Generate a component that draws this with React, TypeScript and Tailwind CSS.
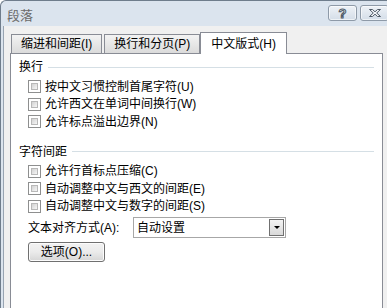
const FONT = "font-['Liberation_Sans','Noto_Sans_CJK_SC',sans-serif]";

type Option = { label: string; key: string };

const lineBreakOptions: Option[] = [
  { label: "按中文习惯控制首尾字符", key: "U" },
  { label: "允许西文在单词中间换行", key: "W" },
  { label: "允许标点溢出边界", key: "N" },
];

const spacingOptions: Option[] = [
  { label: "允许行首标点压缩", key: "C" },
  { label: "自动调整中文与西文的间距", key: "E" },
  { label: "自动调整中文与数字的间距", key: "S" },
];

function CheckBox() {
  return (
    <div className="h-[13px] w-[13px] shrink-0 border border-[#8e8f8f] bg-white p-[2px]">
      <div className="h-full w-full border border-[#b8b8b8] bg-gradient-to-br from-[#d2d2d2] to-[#f6f6f6]" />
    </div>
  );
}

function CheckRow({ label, keyName }: { label: string; keyName: string }) {
  return (
    <div className="flex h-[17.5px] items-center gap-[4px] pl-[17px]">
      <CheckBox />
      <span className="whitespace-nowrap">
        {label}({keyName})
      </span>
    </div>
  );
}

function GroupHeading({ title }: { title: string }) {
  return (
    <div className="flex h-[16px] items-center gap-[5px] pl-[8px] pr-[8px]">
      <span className="whitespace-nowrap">{title}</span>
      <div className="h-px flex-1 bg-[#d5dfe5]" />
    </div>
  );
}

function Tab({ label, active }: { label: string; active?: boolean }) {
  if (active) {
    return (
      <div className="relative z-10 -mb-px flex h-[22px] items-center border border-b-0 border-[#898c95] bg-white px-[10px]">
        {label}
      </div>
    );
  }
  return (
    <div className="flex h-[19px] items-center border border-b-0 border-[#898c95] bg-gradient-to-b from-[#f3f3f3] to-[#dbdbdb] px-[9px]">
      {label}
    </div>
  );
}

function CaptionButton({ children }: { children: React.ReactNode }) {
  return (
    <div className="flex h-[16px] w-[29px] items-center justify-center rounded-[3px] border border-[#8e9aa8] bg-gradient-to-b from-[#eef2f7] to-[#d4dde8] shadow-[inset_0_0_0_1px_rgba(255,255,255,0.6)]">
      {children}
    </div>
  );
}

export default function App() {
  return (
    <div className={`h-[308px] w-[387px] overflow-hidden bg-white text-[12px] leading-[16px] text-black ${FONT}`}>
      <div className="flex h-full flex-col rounded-tl-[6px] border-l border-t border-[#6f7d8c] bg-[#dbe4ee]">
        {/* title bar */}
        <div className="flex h-[25px] shrink-0 items-start">
          <span className="mt-[6px] pl-[6px] text-[13px] leading-[16px] text-[#6a6a6a] font-['Noto_Sans_CJK_SC',sans-serif]">
            段落
          </span>
          <div className="ml-auto mt-[4px] flex gap-[3px] -mr-[2px]">
            <CaptionButton>
              <span className="text-[13px] font-bold leading-none text-transparent [-webkit-text-stroke:1px_#4f5a66]">?</span>
            </CaptionButton>
            <CaptionButton>
              <svg width="14" height="10" viewBox="0 0 14 10">
                <path
                  d="M1.5 1.5 L4.5 1.5 L7 3.8 L9.5 1.5 L12.5 1.5 L8.7 5 L12.5 8.5 L9.5 8.5 L7 6.2 L4.5 8.5 L1.5 8.5 L5.3 5 Z"
                  fill="#f4f6f9"
                  stroke="#4f5a66"
                  strokeWidth="1"
                />
              </svg>
            </CaptionButton>
          </div>
        </div>

        {/* body */}
        <div className="flex flex-1 bg-[#dbe4ee] pl-[2px]">
          <div className="flex-1 border-l border-[#98a4b2] bg-[#f0f0f0] pl-[6px]">
            <div className="flex items-end pl-[1px] pt-[6px]">
              <Tab label="缩进和间距(I)" />
              <div className="w-[2px]" />
              <Tab label="换行和分页(P)" />
              <Tab label="中文版式(H)" active />
            </div>
            <div className="h-[300px] w-[373px] border border-[#898c95] bg-white pt-[5px]">
              <GroupHeading title="换行" />
              <div className="mt-[3px]">
                {lineBreakOptions.map((o) => (
                  <CheckRow key={o.key} label={o.label} keyName={o.key} />
                ))}
              </div>
              <div className="mt-[13px]">
                <GroupHeading title="字符间距" />
              </div>
              <div className="mt-[3px]">
                {spacingOptions.map((o) => (
                  <CheckRow key={o.key} label={o.label} keyName={o.key} />
                ))}
              </div>
              <div className="mt-[2px] flex h-[21px] items-center pl-[17px]">
                <span className="w-[105px] whitespace-nowrap">文本对齐方式(A):</span>
                <div className="flex h-[21px] w-[153px] items-center border border-[#a7a7a7] bg-white pl-[3px] pr-px">
                  <span className="flex-1">自动设置</span>
                  <div className="flex h-[17px] w-[15px] items-center justify-center border border-[#707070] bg-gradient-to-b from-[#f4f4f4] to-[#d9d9d9]">
                    <div className="h-0 w-0 border-x-[3px] border-t-[3px] border-x-transparent border-t-black" />
                  </div>
                </div>
              </div>
              <div className="mt-[4px] pl-[17px]">
                <button
                  type="button"
                  className="flex h-[20px] w-[77px] items-center justify-center rounded-[3px] border border-[#707070] bg-gradient-to-b from-[#f2f2f2] via-[#ebebeb] to-[#d6d6d6] shadow-[inset_0_0_0_1px_#fcfcfc]"
                >
                  选项(O)...
                </button>
              </div>
            </div>
          </div>
        </div>
      </div>
    </div>
  );
}
